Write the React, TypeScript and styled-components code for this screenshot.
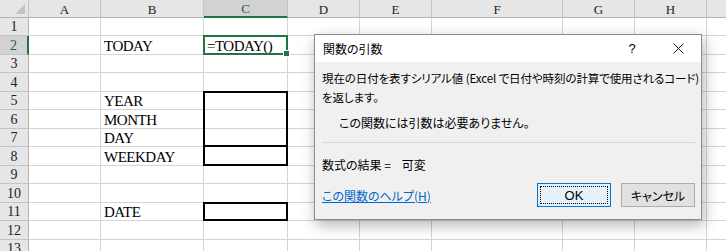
import React from 'react';
import styled, {createGlobalStyle, css} from 'styled-components';

const GlobalStyle = createGlobalStyle`
    html, body {
        margin: 0;
        padding: 0;
        background: #ffffff;
        overflow: hidden;
    }
`;

const columns = ['A', 'B', 'C', 'D', 'E', 'F', 'G', 'H', 'I'];
const rowHeights = [18, 19, 18, 19, 18, 19, 18, 19, 18, 19, 18, 19, 18];

// 太い罫線: t r b l
const borders: Record<string, string> = {
    C5: 'tlr',
    C6: 'lr',
    C7: 'lrb',
    C8: 'lrb',
    C11: 'tlrb',
};

const values: Record<string, string> = {
    B2: 'TODAY',
    C2: '=TODAY()',
    B5: 'YEAR',
    B6: 'MONTH',
    B7: 'DAY',
    B8: 'WEEKDAY',
    B11: 'DATE',
};

const App: React.FC = () => {
    return (
        <Page>
            <GlobalStyle/>
            <Sheet>
                <Corner><CornerMark/></Corner>
                {columns.map((col) => (
                    <ColHeader key={col} $selected={col === 'C'}>{col}</ColHeader>
                ))}
                {rowHeights.map((_, i) => {
                    const row = i + 1;
                    return (
                        <React.Fragment key={row}>
                            <RowHeader $selected={row === 2}>{row}</RowHeader>
                            {columns.map((col) => {
                                const id = `${col}${row}`;
                                return (
                                    <Cell key={id} $edges={borders[id] || ''} $active={id === 'C2'}>
                                        {values[id]}
                                        {id === 'C2' && <FillHandle/>}
                                    </Cell>
                                );
                            })}
                        </React.Fragment>
                    );
                })}
            </Sheet>

            <Dialog>
                <TitleBar>
                    <TitleText>関数の引数</TitleText>
                    <TitleButtons>
                        <Help>?</Help>
                        <Close>
                            <svg width="11" height="11" viewBox="0 0 11 11">
                                <path d="M0.5 0.5 L10.5 10.5 M10.5 0.5 L0.5 10.5" stroke="#111" strokeWidth="1" fill="none"/>
                            </svg>
                        </Close>
                    </TitleButtons>
                </TitleBar>
                <Body>
                    <Description>
                        <Line>現在の日付を表すシリアル値 (Excel で日付や時刻の計算で使用されるコード)</Line>
                        <Line>を返します。</Line>
                    </Description>
                    <Note>この関数には引数は必要ありません。</Note>
                    <Separator/>
                    <Result>数式の結果 =&nbsp;&nbsp;&nbsp;&nbsp;可変</Result>
                    <Footer>
                        <HelpLink>この関数のヘルプ(H)</HelpLink>
                        <Buttons>
                            <Button $primary><FocusRing>OK</FocusRing></Button>
                            <Button>キャンセル</Button>
                        </Buttons>
                    </Footer>
                </Body>
            </Dialog>
        </Page>
    );
};

const Page = styled.div`
    position: relative;
    width: 726px;
    height: 251px;
    overflow: hidden;
`;

const Sheet = styled.div`
    display: grid;
    grid-template-columns: 29px 72px 103px 84px 72px 72px 131px 72px 72px 72px;
    grid-template-rows: 18px ${rowHeights.map((h) => `${h}px`).join(' ')};
    width: 779px;
    font-family: "Liberation Serif", "Noto Sans CJK JP", serif;
`;

const Corner = styled.div`
    position: relative;
    background: #e6e6e6;
    border-right: 1px solid #c4c4c4;
    border-bottom: 1px solid #b4b4b4;
    box-sizing: border-box;
`;

const CornerMark = styled.div`
    position: absolute;
    right: 3px;
    bottom: 3px;
    width: 0;
    height: 0;
    border-left: 10px solid transparent;
    border-bottom: 10px solid #c3c3c3;
`;

const ColHeader = styled.div<{ $selected?: boolean }>`
    display: flex;
    align-items: center;
    justify-content: center;
    padding-top: 2px;
    box-sizing: border-box;
    font-size: 13px;
    color: ${(p) => (p.$selected ? '#1f5f3c' : '#222')};
    background: ${(p) => (p.$selected ? '#d2d2d2' : '#e6e6e6')};
    border-right: 1px solid #c4c4c4;
    border-bottom: ${(p) => (p.$selected ? '2px solid #217346' : '1px solid #b4b4b4')};
`;

const RowHeader = styled.div<{ $selected?: boolean }>`
    display: flex;
    align-items: center;
    justify-content: center;
    padding-top: 1px;
    box-sizing: border-box;
    font-size: 14px;
    color: ${(p) => (p.$selected ? '#1f5f3c' : '#222')};
    background: ${(p) => (p.$selected ? '#d2d2d2' : '#e6e6e6')};
    border-right: ${(p) => (p.$selected ? '2px solid #217346' : '1px solid #b4b4b4')};
    border-bottom: 1px solid #c4c4c4;
`;

const Cell = styled.div<{ $edges: string; $active?: boolean }>`
    position: relative;
    display: flex;
    align-items: center;
    padding: 2px 0 0 3px;
    box-sizing: border-box;
    white-space: nowrap;
    font-size: 15px;
    letter-spacing: -0.5px;
    color: #000;
    border-right: 1px solid #d4d4d4;
    border-bottom: 1px solid #d4d4d4;

    ${(p) => p.$edges && css`
        &::after {
            content: '';
            position: absolute;
            top: -1px;
            left: -1px;
            right: -1px;
            bottom: -1px;
            border-top: ${p.$edges.includes('t') ? '2px solid #000' : 'none'};
            border-right: ${p.$edges.includes('r') ? '2px solid #000' : 'none'};
            border-bottom: ${p.$edges.includes('b') ? '2px solid #000' : 'none'};
            border-left: ${p.$edges.includes('l') ? '2px solid #000' : 'none'};
            pointer-events: none;
        }
    `}

    ${(p) => p.$active && css`
        &::after {
            content: '';
            position: absolute;
            top: -1px;
            left: -1px;
            right: -1px;
            bottom: -1px;
            border: 2px solid #217346;
            pointer-events: none;
        }
    `}
`;

const FillHandle = styled.span`
    position: absolute;
    right: -3px;
    bottom: -3px;
    width: 5px;
    height: 5px;
    background: #217346;
    border: 1px solid #fff;
    z-index: 1;
`;

const Dialog = styled.div`
    position: absolute;
    left: 314px;
    top: 34px;
    width: 388px;
    height: 186px;
    box-sizing: border-box;
    display: flex;
    flex-direction: column;
    background: #f0f0f0;
    border: 1px solid #8c8c8c;
    box-shadow: 2px 5px 14px rgba(0, 0, 0, 0.3);
    font-family: "Noto Sans CJK JP", "Noto Sans", sans-serif;
    font-feature-settings: "palt";
    font-size: 12px;
    color: #000;
`;

const TitleBar = styled.div`
    display: flex;
    align-items: center;
    justify-content: space-between;
    height: 27px;
    padding: 0 0 0 8px;
    background: #ffffff;
`;

const TitleText = styled.span`
    font-size: 12px;
`;

const TitleButtons = styled.div`
    display: flex;
    align-items: center;
    height: 100%;
`;

const Help = styled.span`
    width: 46px;
    text-align: center;
    font-family: "Liberation Sans", sans-serif;
    font-size: 13px;
`;

const Close = styled.span`
    display: flex;
    align-items: center;
    justify-content: center;
    width: 46px;
    height: 100%;
`;

const Body = styled.div`
    flex: 1;
    display: flex;
    flex-direction: column;
    padding: 7px 4px 0 7px;
`;

const Description = styled.div`
    font-size: 11.5px;
    letter-spacing: -0.1px;
`;

const Line = styled.div`
    line-height: 19px;
    white-space: nowrap;
`;

const Note = styled.div`
    margin: 6px 0 0 17px;
    line-height: 19px;
`;

const Separator = styled.div`
    height: 1px;
    margin: 10px 2px 0 0;
    background: #d5d5d5;
`;

const Result = styled.div`
    margin-top: 12px;
    line-height: 19px;
`;

const Footer = styled.div`
    display: flex;
    align-items: center;
    justify-content: space-between;
    margin-top: 9px;
    padding-right: 2px;
`;

const HelpLink = styled.a`
    color: #0066cc;
    text-decoration: underline;
    cursor: pointer;
`;

const Buttons = styled.div`
    display: flex;
    gap: 10px;
`;

const Button = styled.div<{ $primary?: boolean }>`
    display: flex;
    align-items: center;
    justify-content: center;
    width: 74px;
    height: 24px;
    box-sizing: border-box;
    padding: 2px;
    background: ${(p) => (p.$primary ? '#e5f1fb' : '#e1e1e1')};
    border: 1px solid ${(p) => (p.$primary ? '#0078d7' : '#adadad')};
    font-size: 12px;
`;

const FocusRing = styled.div`
    display: flex;
    align-items: center;
    justify-content: center;
    width: 100%;
    height: 100%;
    box-sizing: border-box;
    border: 1px dotted #000;
    font-family: "Liberation Sans", sans-serif;
    font-size: 13px;
`;

export default App;
